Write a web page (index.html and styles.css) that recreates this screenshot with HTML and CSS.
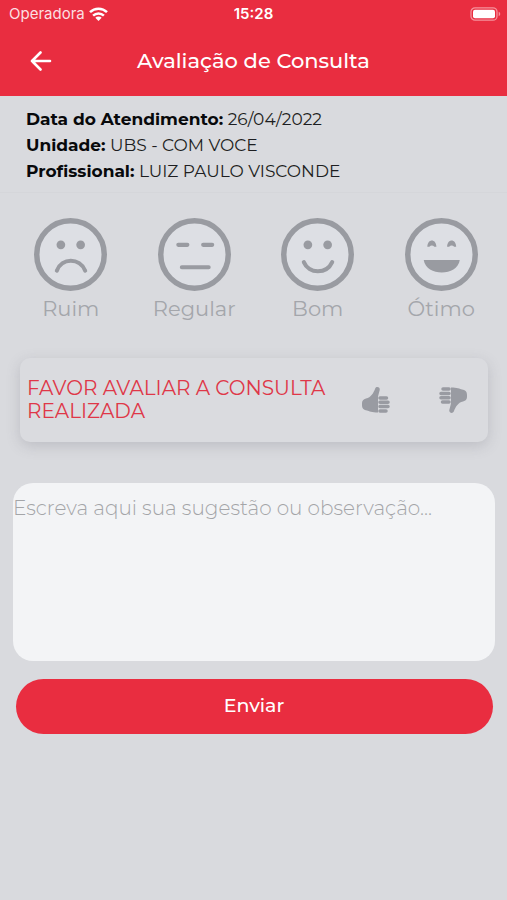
FILE: index.html
```html
<!DOCTYPE html>
<html lang="pt-BR">
<head>
<meta charset="utf-8">
<meta name="viewport" content="width=device-width, initial-scale=1">
<title>Avaliação de Consulta</title>
<link rel="stylesheet" href="styles.css">
</head>
<body>
<header class="header">
  <div class="status">
    <div class="carrier">
      <span>Operadora</span>
      <svg class="wifi" viewBox="0 0 19 14" aria-hidden="true"><g fill="none" stroke="#fff" stroke-width="2.5"><path d="M1 5.2a12.2 12.2 0 0 1 17 0"/><path d="M4.1 8.7a7.8 7.8 0 0 1 10.8 0"/></g><path d="M9.5 14 6.3 10.8a4.6 4.6 0 0 1 6.4 0z" fill="#fff"/></svg>
    </div>
    <span class="clock">15:28</span>
    <svg class="battery" viewBox="0 0 31 14" aria-hidden="true"><rect x="1" y=".8" width="26" height="12.4" rx="4" fill="none" stroke="#f5929c" stroke-width="1.3"/><rect x="3" y="2.7" width="22" height="8.6" rx="2" fill="#fff"/><path d="M28.7 4.8c2 .7 2 3.7 0 4.4z" fill="#f5929c"/></svg>
  </div>
  <div class="navbar">
    <button class="back" type="button" aria-label="Voltar">
      <svg viewBox="0 0 22 20" aria-hidden="true"><path d="M20 10H2M10.500 1.500 2 10l8.500 8.500" fill="none" stroke="#fff" stroke-width="2.600" stroke-linecap="round" stroke-linejoin="round"/></svg>
    </button>
    <h1 class="title">Avaliação de Consulta</h1>
  </div>
</header>
<main>
  <section class="details">
    <p><strong>Data do Atendimento:</strong> 26/04/2022</p>
    <p><strong>Unidade:</strong> UBS - COM VOCE</p>
    <p><strong>Profissional:</strong> LUIZ PAULO VISCONDE</p>
  </section>
  <section class="ratings" aria-label="Nota">
    <button class="rating" type="button">
      <svg viewBox="0 0 72 72" aria-hidden="true"><circle class="ring" cx="36" cy="36" r="33.300"/><circle cx="26.500" cy="26.500" r="4.300"/><circle cx="46" cy="26.500" r="4.300"/><path class="line" d="M22.500 52C27.500 39 45 39 50.500 52"/></svg>
      <span>Ruim</span>
    </button>
    <button class="rating" type="button">
      <svg viewBox="0 0 72 72" aria-hidden="true"><circle class="ring" cx="36" cy="36" r="33.300"/><path class="line" d="M20 26.500h9M44.500 26.500h9M23.500 48.500h26.500"/></svg>
      <span>Regular</span>
    </button>
    <button class="rating" type="button">
      <svg viewBox="0 0 72 72" aria-hidden="true"><circle class="ring" cx="36" cy="36" r="33.300"/><circle cx="26.500" cy="26.500" r="4.300"/><circle cx="46" cy="26.500" r="4.300"/><path class="line" d="M22.500 43.500C27.500 55.500 45 55.500 50.500 43.500"/></svg>
      <span>Bom</span>
    </button>
    <button class="rating" type="button">
      <svg viewBox="0 0 72 72" aria-hidden="true"><circle class="ring" cx="36" cy="36" r="33.300"/><path d="M22 28.300c.4-8 8.600-8 9 0h-2q-2.500-2.400-5 0zM41.500 28.300c.4-8 8.600-8 9 0h-2q-2.500-2.400-5 0z"/><path d="M18.500 41.500h35.500c-2.500 16.500-33 16.500-35.500 0z"/></svg>
      <span>Ótimo</span>
    </button>
  </section>
  <section class="card">
    <p class="question">FAVOR AVALIAR A CONSULTA REALIZADA</p>
    <button class="thumb" type="button" aria-label="Gostei">
      <svg viewBox="0 0 28 26" aria-hidden="true"><path d="M16 25.500C10 25.300 7 24.300 5 23.500 2 22.800 0 22 0 18v-2Q0 12.500 4 11.500C9 10.500 11.500 6 13.200 1.500 14.200-.8 18.200-.2 17.700 3L16 9.500z"/><path class="fingers" d="M18 11h6.500M18 15.300h8M18 19.600h8M18 23.900h6"/></svg>
    </button>
    <button class="thumb" type="button" aria-label="Não gostei">
      <svg class="down" viewBox="0 0 28 26" aria-hidden="true"><path d="M16 25.500C10 25.300 7 24.300 5 23.500 2 22.800 0 22 0 18v-2Q0 12.500 4 11.500C9 10.500 11.500 6 13.200 1.500 14.200-.8 18.200-.2 17.700 3L16 9.500z"/><path class="fingers" d="M18 11h6.500M18 15.300h8M18 19.600h8M18 23.900h6"/></svg>
    </button>
  </section>
  <form class="feedback">
    <textarea class="comment" aria-label="Sugestão ou observação" placeholder="Escreva aqui sua sugestão ou observação..."></textarea>
    <button class="submit" type="button">Enviar</button>
  </form>
</main>
</body>
</html>
```
FILE: styles.css
```css
* { box-sizing: border-box; }
body {
  margin: 0;
  min-height: 100vh;
  background: #d9dade;
  color: #08090b;
  font-family: Montserrat, Inter, "Liberation Sans", sans-serif;
}
h1, p { margin: 0; }
button {
  padding: 0;
  border: 0;
  background: none;
  color: inherit;
  font: inherit;
}
svg { display: block; }

.header { background: #e92d40; color: #fff; }
.status {
  display: grid;
  grid-template-columns: 1fr auto 1fr;
  align-items: center;
  height: 28px;
  padding: 0 6px;
  font: 15px/20px Inter, sans-serif;
}
.carrier {
  display: flex;
  align-items: center;
  gap: 4px;
  padding-left: 3px;
  color: #fcdfe2;
}
.wifi { width: 19px; height: 14px; }
.clock { font-weight: 600; }
.battery { justify-self: end; width: 31px; height: 14px; }
.navbar {
  display: grid;
  grid-template-columns: 60px 1fr 60px;
  align-items: center;
  height: 68px;
  padding-bottom: 2px;
}
.back { justify-self: end; width: 44px; height: 44px; padding: 12px 8px 12px 14px; }
.back svg { width: 22px; height: 20px; }
.title { font-size: 21px; line-height: 28px; font-weight: 500; text-align: center; }

.details {
  padding: 10px 26px 8px;
  border-bottom: 1px solid #d5d6da;
  font-size: 17px;
  line-height: 26px;
}
.details p { color: #1d1e21; }
.details strong { color: #08090b; font-weight: 700; }

.ratings {
  display: grid;
  grid-template-columns: repeat(4, 1fr);
  padding: 25px 4px 0 9px;
  color: #a4a6ab;
}
.rating {
  display: flex;
  flex-direction: column;
  align-items: center;
  gap: 4px;
  font-size: 21px;
  line-height: 28px;
}
.rating svg { width: 73px; height: 73px; fill: #999ba1; }
.rating .ring { fill: #dddfe4; stroke: #999ba1; stroke-width: 5.4; }
.rating .line { fill: none; stroke: #999ba1; stroke-width: 4; stroke-linecap: round; }

.card {
  display: flex;
  align-items: center;
  margin: 35px 19px 0 20px;
  min-height: 84px;
  padding: 0 19px 0 7px;
  border-radius: 10px;
  background: #dadbdf;
  box-shadow: 0 4px 14px rgba(90, 92, 105, 0.22);
}
.question { flex: 1; color: #df3748; font-size: 20px; line-height: 23px; }
.thumb { width: 32px; height: 44px; margin-left: 45px; }
.thumb:first-of-type { margin-left: 22px; }
.thumb svg { width: 28px; height: 26px; margin: auto; fill: #999ba2; }
.thumb .fingers { fill: none; stroke: #999ba2; stroke-width: 3.5; stroke-linecap: round; }
.thumb .down { transform: rotate(180deg); }

.feedback { padding: 41px 12px 20px 13px; }
.comment {
  display: block;
  width: 100%;
  height: 178px;
  padding: 12px 0;
  border: 0;
  border-radius: 20px;
  background: #f3f4f6;
  color: #333;
  font: inherit;
  font-size: 20px;
  font-weight: 300;
  line-height: 26px;
  resize: none;
}
.comment::placeholder { color: #a4a5a8; opacity: 1; }
.submit {
  display: block;
  width: calc(100% - 5px);
  height: 55px;
  margin: 18px auto 0;
  padding-bottom: 2px;
  border-radius: 28px;
  background: #e92d40;
  color: #fff;
  font-size: 19px;
  font-weight: 500;
  line-height: 26px;
}
```
